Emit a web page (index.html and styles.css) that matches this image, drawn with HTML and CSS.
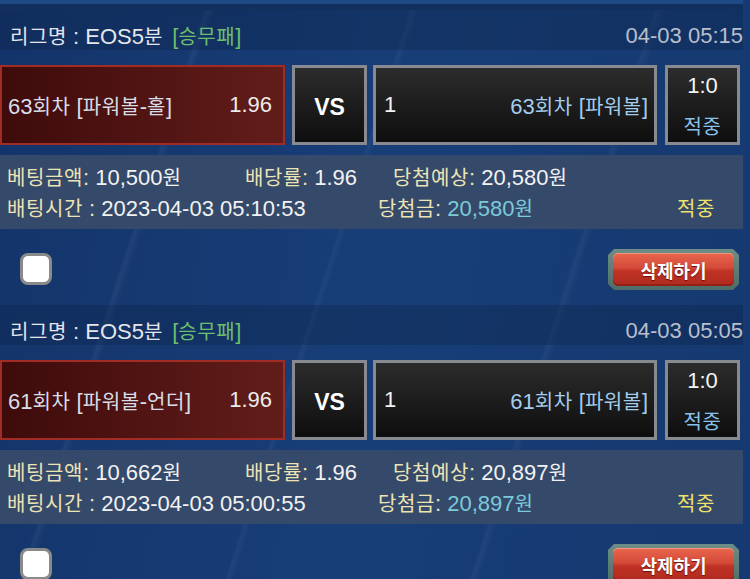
FILE: index.html
```html
<!DOCTYPE html>
<html lang="ko">
<head>
<meta charset="utf-8">
<link rel="stylesheet" href="styles.css">
</head>
<body>
<div class="page">
  <div class="topbar"></div>

  <div class="card">
    <div class="head">
      <div class="league"><span class="ko">리그명</span> : EOS5<span class="ko">분</span> <span class="type">[<span class="ko">승무패</span>]</span></div>
      <div class="time">04-03 05:15</div>
    </div>
    <div class="match">
      <div class="pick"><span>63<span class="ko">회차</span> [<span class="ko">파워볼</span>-<span class="ko">홀</span>]</span><span class="odds">1.96</span></div>
      <div class="vs">VS</div>
      <div class="team"><span class="num">1</span><span class="tname">63<span class="ko">회차</span> [<span class="ko">파워볼</span>]</span></div>
      <div class="score"><span class="sc">1:0</span><span class="res ko">적중</span></div>
    </div>
    <div class="info">
      <div class="row row1">
        <div><span class="lbl"><span class="ko">베팅금액</span>:</span> 10,500<span class="ko">원</span></div>
        <div><span class="lbl"><span class="ko">배당률</span>:</span> 1.96</div>
        <div><span class="lbl"><span class="ko">당첨예상</span>:</span> 20,580<span class="ko">원</span></div>
      </div>
      <div class="row row2">
        <div><span class="lbl"><span class="ko">배팅시간</span> :</span> 2023-04-03 05:10:53</div>
        <div><span class="lbl"><span class="ko">당첨금</span>:</span> <span class="win">20,580<span class="ko">원</span></span></div>
        <div class="hit ko">적중</div>
      </div>
    </div>
    <div class="actions">
      <div class="check"></div>
      <div class="delbtn"><div class="delin">삭제하기</div></div>
    </div>
  </div>

  <div class="card">
    <div class="head">
      <div class="league"><span class="ko">리그명</span> : EOS5<span class="ko">분</span> <span class="type">[<span class="ko">승무패</span>]</span></div>
      <div class="time">04-03 05:05</div>
    </div>
    <div class="match">
      <div class="pick"><span>61<span class="ko">회차</span> [<span class="ko">파워볼</span>-<span class="ko">언더</span>]</span><span class="odds">1.96</span></div>
      <div class="vs">VS</div>
      <div class="team"><span class="num">1</span><span class="tname">61<span class="ko">회차</span> [<span class="ko">파워볼</span>]</span></div>
      <div class="score"><span class="sc">1:0</span><span class="res ko">적중</span></div>
    </div>
    <div class="info">
      <div class="row row1">
        <div><span class="lbl"><span class="ko">베팅금액</span>:</span> 10,662<span class="ko">원</span></div>
        <div><span class="lbl"><span class="ko">배당률</span>:</span> 1.96</div>
        <div><span class="lbl"><span class="ko">당첨예상</span>:</span> 20,897<span class="ko">원</span></div>
      </div>
      <div class="row row2">
        <div><span class="lbl"><span class="ko">배팅시간</span> :</span> 2023-04-03 05:00:55</div>
        <div><span class="lbl"><span class="ko">당첨금</span>:</span> <span class="win">20,897<span class="ko">원</span></span></div>
        <div class="hit ko">적중</div>
      </div>
    </div>
    <div class="actions">
      <div class="check"></div>
      <div class="delbtn"><div class="delin">삭제하기</div></div>
    </div>
  </div>
</div>
</body>
</html>
```

FILE: styles.css
```css
html, body {
  margin: 0;
  padding: 0;
  height: 100%;
  overflow: hidden;
}
body {
  font-family: "Liberation Sans", "Noto Sans CJK KR", sans-serif;
  font-size: 22px;
  color: #f2f2f2;
  background-color: #163a70;
  background-image:
    linear-gradient(108deg, transparent 22%, rgba(255,255,255,0.05) 22.4%, transparent 23.2%),
    linear-gradient(108deg, transparent 44%, rgba(255,255,255,0.04) 44.3%, transparent 45%),
    linear-gradient(108deg, transparent 70%, rgba(255,255,255,0.04) 70.4%, transparent 71.2%),
    linear-gradient(100deg, #13346a 0%, #183e78 50%, #153970 100%);
}
.ko {
  font-family: "Noto Sans CJK KR", sans-serif;
  font-size: 20px;
  letter-spacing: 0.6px;
}
.page {
  width: 743px;
}
.topbar {
  height: 10px;
  background: linear-gradient(to bottom, #1f4a88 0, #1f4a88 4px, #132f5d 4px, #132f5d 10px);
}
.card {
  padding-bottom: 15px;
}
.head {
  height: 40px;
  box-sizing: border-box;
  padding: 11px 0 0 10px;
  display: flex;
  align-items: center;
  justify-content: space-between;
  background: rgba(10, 28, 62, 0.28);
  color: #e4e6ec;
}
.type {
  color: #6cbf6c;
  margin-left: 3px;
}
.time {
  color: #b8bfcb;
}
.match {
  margin-top: 15px;
  height: 80px;
  display: flex;
}
.match > div {
  box-sizing: border-box;
  height: 80px;
}
.pick {
  width: 285px;
  border: 2px solid #a12c25;
  background: linear-gradient(to right, #3e0b0b, #621d1a);
  display: flex;
  align-items: center;
  justify-content: space-between;
  padding: 0 11px 0 6px;
  color: #d9dee8;
}
.odds {
  color: #ececec;
}
.vs, .team, .score {
  border: 3px solid #878b91;
  background: linear-gradient(to bottom, #2c2c2c, #0e0e0e);
}
.vs {
  width: 75px;
  margin-left: 7px;
  padding-top: 4px;
  display: flex;
  align-items: center;
  justify-content: center;
  font-weight: bold;
  font-size: 23px;
  color: #ffffff;
}
.team {
  width: 284px;
  margin-left: 6px;
  display: flex;
  align-items: center;
  justify-content: space-between;
  padding: 0 6px 0 8px;
}
.num {
  color: #f2f2f2;
}
.tname {
  color: #a3ccee;
}
.score {
  width: 75px;
  margin-left: 8px;
  display: flex;
  flex-direction: column;
  align-items: center;
  padding-top: 3px;
  gap: 10px;
}
.score span {
  line-height: 30px;
}
.sc {
  color: #f4f4f4;
}
.res {
  color: #88c2ec;
}
.info {
  margin-top: 10px;
  height: 74px;
  box-sizing: border-box;
  padding: 7px 0 0 7px;
  background: #35496a;
}
.row {
  display: grid;
  line-height: 30px;
  white-space: nowrap;
}
.row1 {
  grid-template-columns: 238px 148px auto;
}
.row2 {
  grid-template-columns: 371px 299px auto;
}
.lbl {
  color: #ede4b4;
}
.win {
  color: #7ccad8;
}
.hit {
  color: #eee26a;
}
.actions {
  margin-top: 20px;
  height: 41px;
  display: flex;
  justify-content: space-between;
  align-items: flex-start;
}
.check {
  margin: 4px 0 0 20px;
  width: 32px;
  height: 32px;
  box-sizing: border-box;
  border: 3px solid #8a8a8a;
  border-radius: 8px;
  background: #ffffff;
}
.delbtn {
  width: 131px;
  height: 41px;
  margin-right: 4px;
  box-sizing: border-box;
  padding: 4px 5px;
  background: linear-gradient(to bottom, #6d8c86, #4f6d68);
  clip-path: polygon(6px 0, 125px 0, 131px 6px, 131px 35px, 125px 41px, 6px 41px, 0 35px, 0 6px);
}
.delin {
  height: 100%;
  border-radius: 5px;
  background: linear-gradient(to bottom, #e8664e 0%, #d44a38 45%, #bf3224 55%, #b02a20 100%);
  box-shadow: inset 0 1px 0 rgba(255,200,180,0.5), inset 0 -2px 0 rgba(120,20,10,0.5);
  display: flex;
  align-items: center;
  justify-content: center;
  font-family: "Noto Sans CJK KR", sans-serif;
  font-weight: bold;
  font-size: 18px;
  color: #ffffff;
  text-shadow: 0 1px 1px rgba(90, 10, 5, 0.9);
}
```
